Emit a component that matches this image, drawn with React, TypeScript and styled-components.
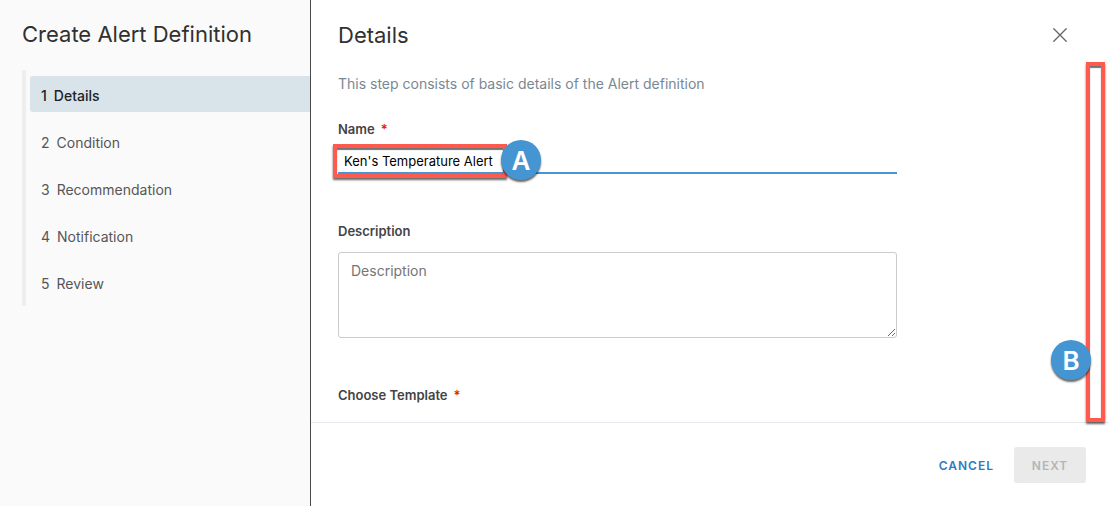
import React from "react";
import styled, { createGlobalStyle, css } from "styled-components";

const GlobalStyle = createGlobalStyle`
  *, *::before, *::after { box-sizing: border-box; }
  body {
    margin: 0;
    background: #fff;
    color: #313131;
    font-family: Inter, "Open Sans", sans-serif;
    font-size: 14px;
    line-height: 20px;
  }
`;

const Wizard = styled.div`
  display: flex;
  min-height: 100vh;
`;

const Sidebar = styled.aside`
  flex: 0 0 311px;
  padding: 20px 0 20px 22px;
  background: #fafafa;
  border-right: 1px solid #4a4a4a;
`;

const Title = styled.h1`
  margin: 0;
  font-size: 22px;
  font-weight: 400;
  line-height: 28px;
`;

const Steps = styled.ol`
  display: flex;
  flex-direction: column;
  gap: 11px;
  margin: 22px 0 0;
  padding: 6px 0 6px 4px;
  list-style: none;
  border-left: 4px solid #eee;
`;

const Step = styled.button<{ $active?: boolean }>`
  display: flex;
  align-items: center;
  gap: 7px;
  width: 100%;
  height: 36px;
  padding: 4px 11px 0;
  border: 0;
  border-radius: 3px 0 0 3px;
  background: transparent;
  color: #565656;
  font: inherit;
  text-align: left;
  ${({ $active }) =>
    $active &&
    css`
      background: #d9e4ea;
      color: #222;
      font-weight: 500;
    `}
`;

const Main = styled.main`
  flex: 1;
  display: flex;
  flex-direction: column;
  min-width: 0;
`;

const Header = styled.header`
  display: flex;
  align-items: center;
  justify-content: space-between;
  padding: 21px 42px 0 27px;
`;

const CloseButton = styled.button`
  display: flex;
  padding: 0;
  border: 0;
  background: none;
  color: #666;
`;

const Body = styled.div`
  position: relative;
  flex: 1;
  padding: 25px 27px 0;
`;

const Intro = styled.p`
  margin: 0 0 25px;
  color: #798893;
`;

const Field = styled.div`
  display: flex;
  flex-direction: column;
  align-items: flex-start;
  max-width: 559px;
  margin-bottom: 47px;
  &:last-of-type { margin-bottom: 16px; }
`;

const Fields = styled.form`
  display: block;
`;

const Label = styled.label`
  color: #444;
  font-size: 13px;
  font-weight: 600;
`;

const Required = styled.span`
  margin-left: 6px;
  color: #e12200;
`;

const InputWrap = styled.div`
  position: relative;
  width: 100%;
  margin-top: 9px;
`;

const TextInput = styled.input`
  display: block;
  width: 100%;
  height: 26px;
  padding: 2px 6px 0;
  border: 0;
  border-bottom: 2px solid #4795d3;
  outline: 0;
  background: transparent;
  color: #000;
  font: inherit;
  font-size: 13px;
`;

const TextArea = styled.textarea`
  display: block;
  width: 100%;
  height: 86px;
  margin-top: 11px;
  padding: 8px 12px;
  border: 1px solid #ccc;
  border-radius: 3px;
  outline: 0;
  color: #000;
  font: inherit;
  resize: both;
  &::placeholder { color: #757575; }
`;

const Footer = styled.footer`
  display: flex;
  justify-content: flex-end;
  gap: 8px;
  padding: 24px 23px 23px;
  border-top: 1px solid #e8e8ee;
`;

const Action = styled.button<{ $solid?: boolean }>`
  height: 36px;
  padding: 2px 12px 0;
  border: 0;
  border-radius: 3px;
  background: ${({ $solid }) => ($solid ? "#eaeaea" : "transparent")};
  color: ${({ $solid }) => ($solid ? "#b5b5b5" : "#2f7bc0")};
  font: inherit;
  font-size: 12px;
  font-weight: 600;
  letter-spacing: 1px;
  ${({ $solid }) => $solid && css`min-width: 72px;`}
`;

const Callout = styled.div`
  position: absolute;
  border: 4px solid #ff5a4d;
  box-shadow: 0 2px 2px rgba(0, 0, 0, 0.6), inset 0 2px 1px rgba(0, 0, 0, 0.55);
  pointer-events: none;
`;

const NameCallout = styled(Callout)`
  top: -4px;
  left: -5px;
  width: 174px;
  height: 34px;
`;

const ScrollCallout = styled(Callout)`
  top: 13px;
  right: 4px;
  bottom: 0;
  width: 19px;
`;

const Badge = styled.span`
  position: absolute;
  display: flex;
  align-items: center;
  justify-content: center;
  width: 40px;
  height: 40px;
  padding-top: 2px;
  border-radius: 50%;
  background: #4695d3;
  box-shadow: 0 2px 2px rgba(0, 0, 0, 0.6);
  color: #fff;
  font-size: 26px;
  font-weight: 600;
`;

const NameBadge = styled(Badge)`
  top: -8px;
  left: 163px;
`;

const ScrollBadge = styled(Badge)`
  right: 18px;
  bottom: 42px;
`;

const steps = ["Details", "Condition", "Recommendation", "Notification", "Review"];

export default function App() {
  return (
    <Wizard>
      <GlobalStyle />
      <Sidebar>
        <Title>Create Alert Definition</Title>
        <Steps>
          {steps.map((step, index) => (
            <li key={step}>
              <Step type="button" $active={index === 0} aria-current={index === 0 ? "step" : undefined}>
                <span>{index + 1}</span>
                <span>{step}</span>
              </Step>
            </li>
          ))}
        </Steps>
      </Sidebar>
      <Main>
        <Header>
          <Title as="h2">Details</Title>
          <CloseButton type="button" aria-label="Close">
            <svg width="14" height="14" viewBox="0 0 14 14" fill="none" stroke="currentColor" strokeWidth="1.3" strokeLinecap="round">
              <path d="M0.8 0.8 13.2 13.2M13.2 0.8 0.8 13.2" />
            </svg>
          </CloseButton>
        </Header>
        <Body>
          <Intro>This step consists of basic details of the Alert definition</Intro>
          <Fields>
            <Field>
              <Label htmlFor="name">
                Name<Required>*</Required>
              </Label>
              <InputWrap>
                <TextInput id="name" type="text" required defaultValue="Ken's Temperature Alert" />
                <NameCallout />
                <NameBadge>A</NameBadge>
              </InputWrap>
            </Field>
            <Field>
              <Label htmlFor="description">Description</Label>
              <TextArea id="description" placeholder="Description" />
            </Field>
            <Field>
              <Label as="span">
                Choose Template<Required>*</Required>
              </Label>
            </Field>
          </Fields>
          <ScrollCallout />
          <ScrollBadge>B</ScrollBadge>
        </Body>
        <Footer>
          <Action type="button">CANCEL</Action>
          <Action type="button" $solid disabled>
            NEXT
          </Action>
        </Footer>
      </Main>
    </Wizard>
  );
}
